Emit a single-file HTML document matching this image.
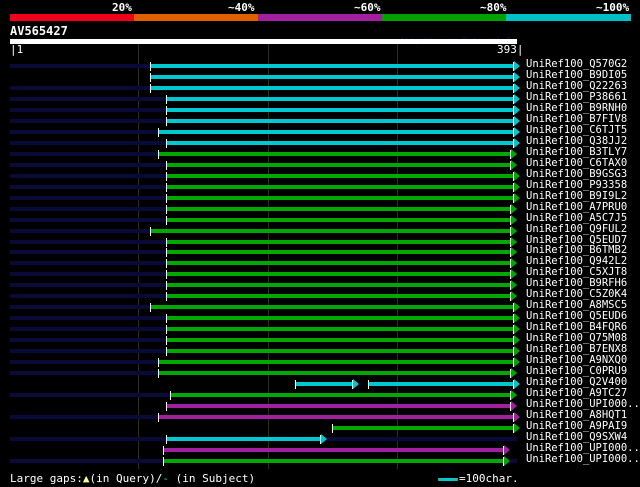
<!DOCTYPE html>
<html><head><meta charset="utf-8"><style>
body{margin:0;background:#000;width:640px;height:487px;overflow:hidden;position:relative;font-family:"DejaVu Sans Mono","Liberation Mono",monospace;color:#fff}
div{position:absolute}
.t{font-size:11px;line-height:11px;white-space:pre}
.lab{font-size:10.5px;line-height:11px;left:526px;white-space:pre}
</style></head><body>
<div class="t" style="left:112px;top:2px;font-weight:bold">20%</div>
<div class="t" style="left:228px;top:2px;font-weight:bold">~40%</div>
<div class="t" style="left:354px;top:2px;font-weight:bold">~60%</div>
<div class="t" style="left:480px;top:2px;font-weight:bold">~80%</div>
<div class="t" style="left:596px;top:2px;font-weight:bold">~100%</div>
<div style="left:10px;top:14px;width:124px;height:7px;background:#f00018"></div>
<div style="left:134px;top:14px;width:124px;height:7px;background:#e06000"></div>
<div style="left:258px;top:14px;width:124px;height:7px;background:#a020a0"></div>
<div style="left:382px;top:14px;width:124px;height:7px;background:#00a000"></div>
<div style="left:506px;top:14px;width:125px;height:7px;background:#00c0c8"></div>
<div class="t" style="left:10px;top:26px;font-weight:bold;font-size:12px">AV565427</div>
<div style="left:400px;top:36px;font-size:8px;color:#101040">AlignView.pm Beta rel.7</div>
<div style="left:10px;top:39px;width:507px;height:5px;background:#fff"></div>
<div class="t" style="left:10px;top:44px">|1</div>
<div class="t" style="left:497px;top:44px">393|</div>
<div style="left:138px;top:44px;width:1px;height:425px;background:#303010"></div>
<div style="left:268px;top:44px;width:1px;height:425px;background:#303010"></div>
<div style="left:397px;top:44px;width:1px;height:425px;background:#303010"></div>
<div id="rows"></div>
<div class="t" style="left:10px;top:473px">Large gaps:<span style="color:#ff8">▲</span>(in Query)/<span style="color:#0cc">-</span> (in Subject)</div>
<div style="left:438px;top:478px;width:18px;height:3px;background:#00c8d0;border-left:1px solid #880;border-right:1px solid #880"></div>
<div class="t" style="left:459px;top:473px">=100char.</div>
<script>
var C={c:"#00c8d0",g:"#00a800",m:"#a020a0"};
var R=[["Q570G2","c",150,513,1],["B9DI05","c",150,513,0],["Q22263","c",150,513,1],["P38661","c",166,513,1],["B9RNH0","c",166,513,1],["B7FIV8","c",166,513,1],["C6TJT5","c",158,513,1],["Q38JJ2","c",166,513,1],["B3TLY7","g",158,510,1],["C6TAX0","g",166,510,1],["B9GSG3","g",166,513,1],["P93358","g",166,513,1],["B9I9L2","g",166,513,1],["A7PRU0","g",166,510,1],["A5C7J5","g",166,510,1],["Q9FUL2","g",150,510,1],["Q5EUD7","g",166,510,1],["B6TMB2","g",166,510,1],["Q942L2","g",166,510,1],["C5XJT8","g",166,510,1],["B9RFH6","g",166,510,1],["C5Z0K4","g",166,510,1],["A8MSC5","g",150,513,1],["Q5EUD6","g",166,513,1],["B4FQR6","g",166,513,1],["Q75M08","g",166,513,1],["B7ENX8","g",166,513,1],["A9NXQ0","g",158,513,1],["C0PRU9","g",158,510,1],["Q2V400","c",368,513,0],["A9TC27","g",170,510,1],["UPI000..","m",166,510,0],["A8HQT1","m",158,513,1],["A9PAI9","g",332,513,0],["Q9SXW4","c",166,320,1],["UPI000..","m",163,503,0],["UPI000..","g",163,503,1]];
var h="";
function tri(x,y,col){return '<div style="left:'+(x+1)+'px;top:'+(y-4)+'px;width:0;height:0;border-top:5px solid transparent;border-bottom:5px solid transparent;border-left:6px solid '+col+'"></div>';}
function tk(x,y){return '<div style="left:'+x+'px;top:'+(y-3)+'px;width:1px;height:9px;background:#fff"></div>';}
R.forEach(function(r,i){var y=Math.round(65+i*10.97);var col=C[r[1]];
if(r[4])h+='<div style="left:10px;top:'+(y-1)+'px;width:507px;height:4px;background:#0a0a38"></div>';
h+='<div style="left:'+r[2]+'px;top:'+(y-1)+'px;width:'+(r[3]-r[2])+'px;height:4px;background:'+col+'"></div>';
h+=tri(r[3],y,col)+tk(r[2],y)+tk(r[3],y);
h+='<div class="lab" style="top:'+(y-6)+'px">UniRef100_'+r[0]+'</div>';
if(i==29){h+='<div style="left:295px;top:'+(y-1)+'px;width:57px;height:4px;background:'+col+'"></div>'+tk(295,y)+tri(352,y,col)+tk(352,y);}
});
document.getElementById("rows").innerHTML=h;
</script>
</body></html>
